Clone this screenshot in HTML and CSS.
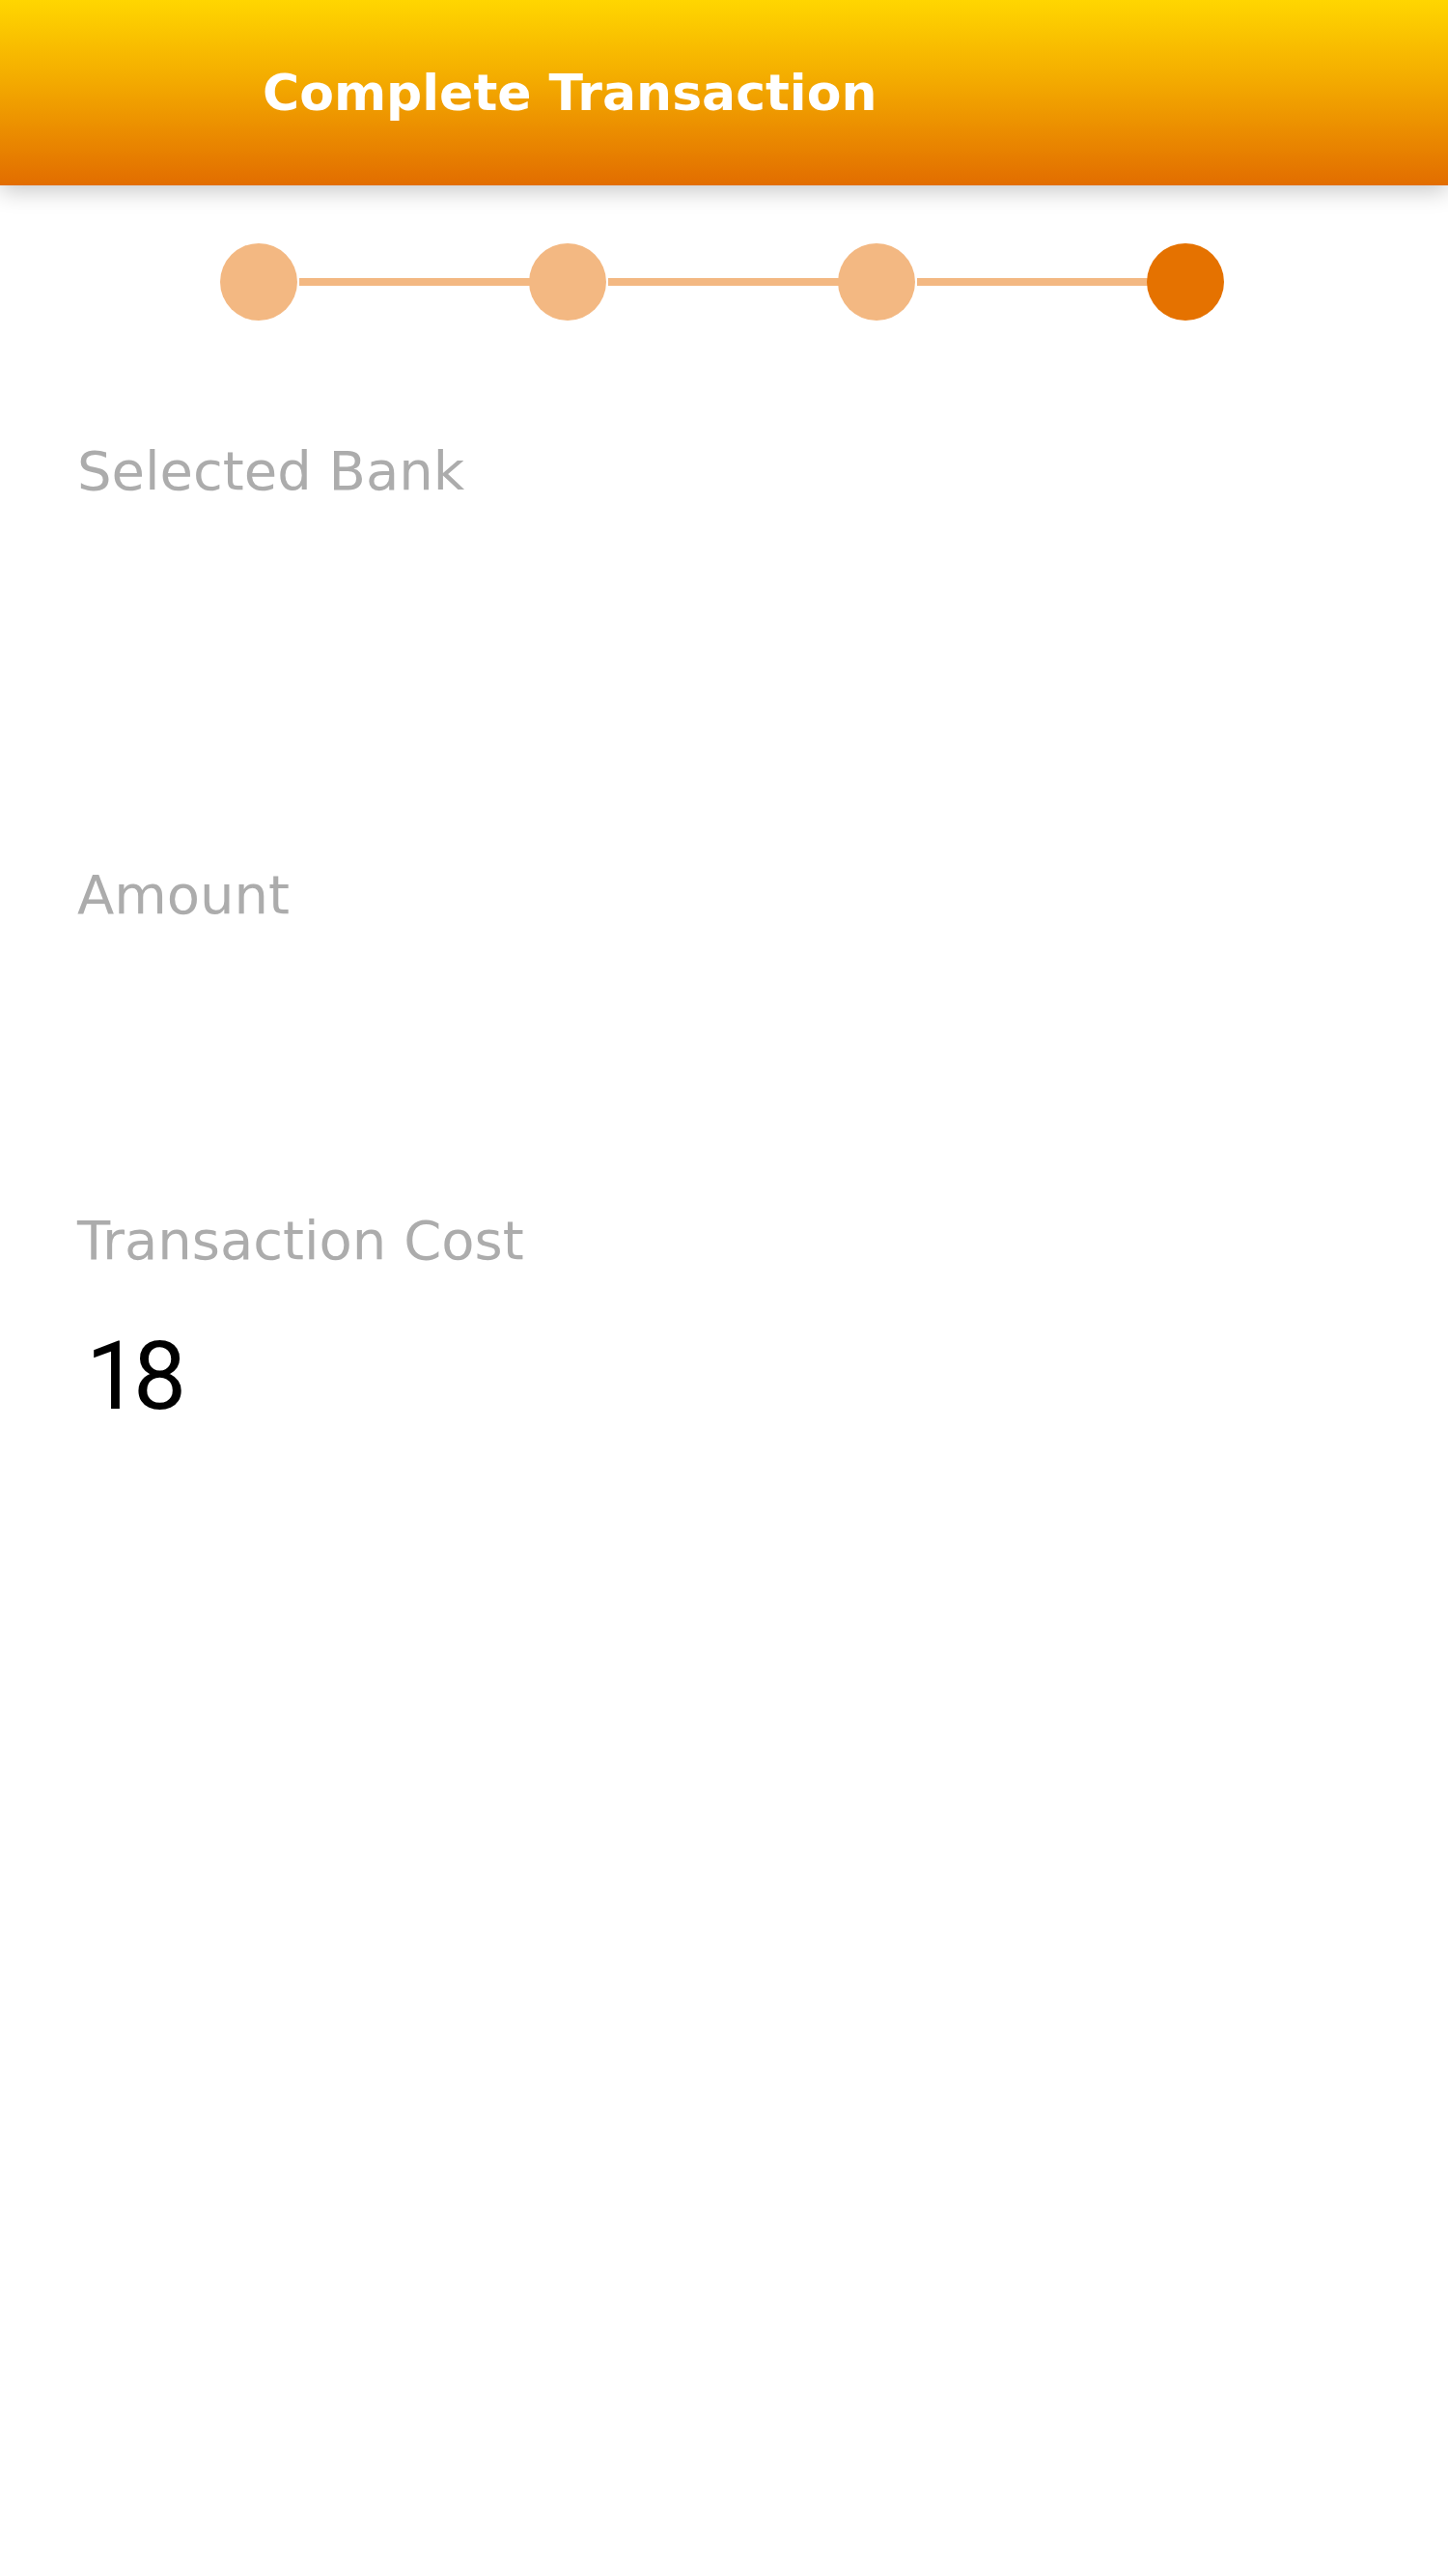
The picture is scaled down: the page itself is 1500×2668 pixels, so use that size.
FILE: index.html
```html
<!DOCTYPE html>
<html>
<head>
<meta charset="utf-8">
<link rel="stylesheet" href="styles.css">
</head>
<body>
<header class="appbar">
  <h1 class="title">Complete Transaction</h1>
</header>
<div class="stepper">
  <span class="dot done"></span>
  <span class="line"></span>
  <span class="dot done"></span>
  <span class="line"></span>
  <span class="dot done"></span>
  <span class="line"></span>
  <span class="dot active"></span>
</div>
<main class="content">
  <section class="field field-bank">
    <div class="label">Selected Bank</div>
    <div class="value"></div>
  </section>
  <section class="field field-amount">
    <div class="label">Amount</div>
    <div class="value"></div>
  </section>
  <section class="field field-cost">
    <div class="label">Transaction Cost</div>
    <div class="value big">18</div>
  </section>
</main>
</body>
</html>
```
FILE: styles.css
```css
html, body {
  margin: 0;
  padding: 0;
  background: #ffffff;
  font-family: "DejaVu Sans", "Noto Sans", sans-serif;
}
.appbar {
  height: 192px;
  background: linear-gradient(to bottom, #ffd600 0%, #f3a900 45%, #e26d00 100%);
  box-shadow: 0 6px 22px rgba(0, 0, 0, 0.22);
  display: flex;
  align-items: center;
  padding-left: 272px;
  position: relative;
  z-index: 1;
}
.title {
  margin: 0;
  color: #ffffff;
  font-size: 52px;
  font-weight: bold;
  line-height: 1;
}
.stepper {
  display: flex;
  align-items: center;
  justify-content: center;
  margin-top: 60px;
  height: 80px;
  padding-right: 4px;
}
.dot {
  width: 80px;
  height: 80px;
  border-radius: 50%;
  flex: none;
}
.dot.done { background: #f3b882; }
.dot.active { background: #e57200; }
.line {
  width: 239px;
  height: 8px;
  background: #f3b882;
  margin-left: 2px;
  margin-right: -1px;
  flex: none;
}
.content {
  padding-left: 80px;
}
.label {
  color: #acacac;
  font-size: 56px;
  line-height: 1;
}
.field-bank { margin-top: 128px; }
.field-amount { margin-top: 383px; }
.field-cost { margin-top: 302px; }
.value.big {
  color: #000000;
  font-family: Roboto, "DejaVu Sans", sans-serif;
  font-size: 98px;
  line-height: 1;
  letter-spacing: -6px;
  margin-top: 64px;
  margin-left: 9px;
}
```
